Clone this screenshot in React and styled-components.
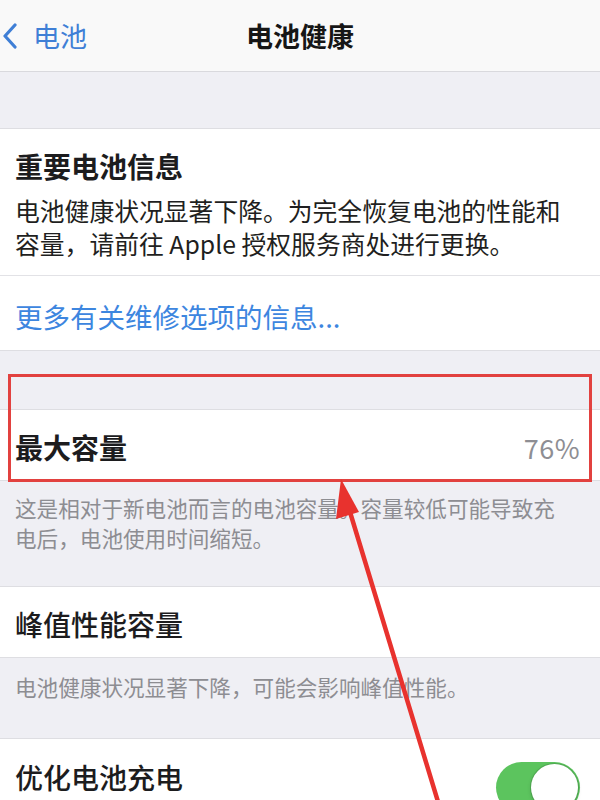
import React from "react";
import styled, { createGlobalStyle } from "styled-components";

const Global = createGlobalStyle`
  html, body { margin: 0; padding: 0; background: #efeff4; }
  body { font-family: "Noto Sans CJK SC", "Noto Sans", sans-serif; color: #1c1c1e; }
`;

const Page = styled.div`
  position: relative;
  width: 600px;
  height: 800px;
  overflow: hidden;
  background: #efeff4;
`;

const NavBar = styled.header`
  height: 71px;
  background: #f9f9f9;
  border-bottom: 1px solid #d9d9dd;
  display: grid;
  grid-template-columns: 1fr auto 1fr;
  align-items: center;
`;

const BackButton = styled.div`
  display: flex;
  align-items: center;
  gap: 16px;
  padding-left: 3px;
  color: #3f7fd6;
  font-size: 27px;
  line-height: 1;
`;

const NavTitle = styled.h1`
  margin: 0;
  font-size: 27px;
  font-weight: 700;
  color: #161616;
  line-height: 1;
`;

const Gap = styled.div`
  height: ${(p) => p.$h}px;
`;

const Section = styled.section`
  background: #ffffff;
  border-top: 1px solid #dedee2;
  border-bottom: 1px solid #dedee2;
`;

const InfoBlock = styled.div`
  padding: 19px 15px 15px;
  border-bottom: 1px solid #e2e2e6;
`;

const InfoTitle = styled.div`
  font-size: 28px;
  font-weight: 700;
  line-height: 36px;
  margin-bottom: 10px;
`;

const InfoBody = styled.p`
  margin: 0;
  font-size: 24.8px;
  line-height: 33px;
  color: #1f1f21;
`;

const LinkRow = styled.div`
  height: 74px;
  display: flex;
  align-items: center;
  padding: 6px 15px 0;
  box-sizing: border-box;
  color: #3d86df;
  font-size: 27.5px;
`;

const Row = styled.div`
  height: ${(p) => p.$h || 71}px;
  display: flex;
  align-items: center;
  justify-content: space-between;
  padding: 4px 20px 0 15px;
  box-sizing: border-box;
`;

const RowLabel = styled.span`
  font-size: 28px;
  font-weight: ${(p) => (p.$bold ? 700 : 500)};
  color: #1c1c1e;
`;

const RowValue = styled.span`
  font-size: 27px;
  color: #8e8e93;
  letter-spacing: 0.5px;
`;

const Footer = styled.p`
  margin: 0;
  padding: ${(p) => p.$pad};
  font-size: 21.6px;
  line-height: 30px;
  color: #8d8d92;
`;

const Toggle = styled.div`
  width: 84px;
  height: 51px;
  border-radius: 26px;
  background: #5cc45e;
  position: relative;
  margin-right: 0;
  margin-top: 20px;
  flex-shrink: 0;
`;

const Knob = styled.div`
  position: absolute;
  right: 2px;
  top: 2px;
  width: 47px;
  height: 47px;
  border-radius: 50%;
  background: #ffffff;
  box-shadow: 0 0 0 1px rgba(0, 0, 0, 0.12), 0 2px 4px rgba(0, 0, 0, 0.15);
`;

const Annotation = styled.svg`
  position: absolute;
  left: 0;
  top: 0;
  pointer-events: none;
`;

export default function App() {
  return (
    <>
      <Global />
      <Page>
        <NavBar>
          <BackButton>
            <svg width="14" height="26" viewBox="0 0 14 26">
              <polyline
                points="12,2 2,13 12,24"
                fill="none"
                stroke="#3f7fd6"
                strokeWidth="3.2"
                strokeLinecap="round"
                strokeLinejoin="round"
              />
            </svg>
            <span>电池</span>
          </BackButton>
          <NavTitle>电池健康</NavTitle>
          <div />
        </NavBar>
        <Gap $h={56} />
        <Section>
          <InfoBlock>
            <InfoTitle>重要电池信息</InfoTitle>
            <InfoBody>
              电池健康状况显著下降。为完全恢复电池的性能和
              <br />
              容量，请前往 Apple 授权服务商处进行更换。
            </InfoBody>
          </InfoBlock>
          <LinkRow>更多有关维修选项的信息...</LinkRow>
        </Section>
        <Gap $h={58} />
        <Section>
          <Row $h={70}>
            <RowLabel $bold>最大容量</RowLabel>
            <RowValue>76%</RowValue>
          </Row>
        </Section>
        <Footer $pad="12px 15px 33px">
          这是相对于新电池而言的电池容量。容量较低可能导致充
          <br />
          电后，电池使用时间缩短。
        </Footer>
        <Section>
          <Row $h={70}>
            <RowLabel>峰值性能容量</RowLabel>
          </Row>
        </Section>
        <Footer $pad="14px 15px 36px">
          电池健康状况显著下降，可能会影响峰值性能。
        </Footer>
        <Section>
          <Row $h={72}>
            <RowLabel>优化电池充电</RowLabel>
            <Toggle>
              <Knob />
            </Toggle>
          </Row>
        </Section>
        <Annotation width="600" height="800" viewBox="0 0 600 800">
          <rect
            x="9.5"
            y="375.5"
            width="581"
            height="105"
            fill="none"
            stroke="#e2413f"
            strokeWidth="3"
          />
          <line
            x1="350"
            y1="512"
            x2="439"
            y2="805"
            stroke="#e8322e"
            strokeWidth="4.5"
            strokeLinecap="round"
          />
          <polygon points="341,479 336,519 359,512" fill="#e8322e" />
        </Annotation>
      </Page>
    </>
  );
}
